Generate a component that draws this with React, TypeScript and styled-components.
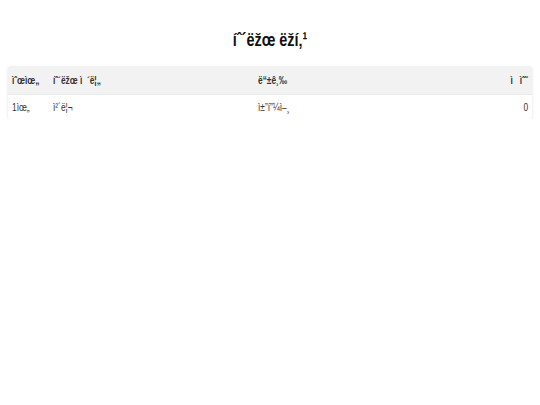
import styled, { createGlobalStyle } from "styled-components";

const GlobalStyle = createGlobalStyle`
  html, body {
    margin: 0;
    padding: 0;
    background: #ffffff;
    font-family: "Liberation Sans", Arial, sans-serif;
    color: #222;
  }
`;

const Page = styled.div`
  padding: 27px 8px 0;
`;

const Title = styled.h1`
  margin: 0 0 13px;
  text-align: center;
  font-size: 19px;
  font-weight: bold;
  line-height: 26px;
  color: #111;
`;

// the reference type is a tall, condensed sans
const Narrow = styled.span<{ $origin?: string }>`
  display: inline-block;
  transform: scaleX(0.76);
  transform-origin: ${(p) => p.$origin || "left"} center;
`;

const Table = styled.div`
  background: #fff;
  border-radius: 3px;
  box-shadow: 0 1px 3px rgba(0, 0, 0, 0.12);
  overflow: hidden;
`;

const Row = styled.div<{ $head?: boolean }>`
  display: grid;
  grid-template-columns: 41px 205px 1fr auto;
  align-items: center;
  height: ${(p) => (p.$head ? 28 : 24)}px;
  padding: 0 4px;
  background: ${(p) => (p.$head ? "#f2f2f2" : "#fff")};
  border-bottom: 1px solid #ebebeb;
  font-size: 11px;
  font-weight: ${(p) => (p.$head ? "bold" : "normal")};
  color: #333;
  &:last-child {
    border-bottom: none;
  }
`;

const Cell = styled.div<{ $right?: boolean }>`
  white-space: pre;
  text-align: ${(p) => (p.$right ? "right" : "left")};
`;

const rows = [{ rank: "1ìœ„", name: "ì²´ë¦¬", grade: "ì±”í”¼ì–¸", score: 0 }];

export default function App() {
  return (
    <Page>
      <GlobalStyle />
      <Title>
        <Narrow $origin="center">íˆ´ëžœ ëž­í‚¹</Narrow>
      </Title>
      <Table>
        <Row $head>
          <Cell><Narrow>ìˆœìœ„</Narrow></Cell>
          <Cell><Narrow>{"íˆ´ëžœ ì  ´ë¦„"}</Narrow></Cell>
          <Cell><Narrow>ë“±ê¸‰</Narrow></Cell>
          <Cell $right><Narrow $origin="right">{"ì   ìˆ˜"}</Narrow></Cell>
        </Row>
        {rows.map((r) => (
          <Row key={r.rank}>
            <Cell><Narrow>{r.rank}</Narrow></Cell>
            <Cell><Narrow>{r.name}</Narrow></Cell>
            <Cell><Narrow>{r.grade}</Narrow></Cell>
            <Cell $right><Narrow $origin="right">{r.score}</Narrow></Cell>
          </Row>
        ))}
      </Table>
    </Page>
  );
}
